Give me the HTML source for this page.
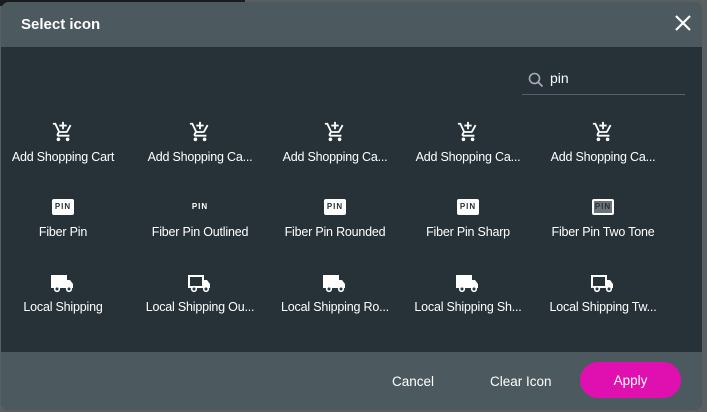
<!DOCTYPE html><html><head><style>
body{margin:0;width:707px;height:412px;background:#5a5f62;position:relative;overflow:hidden;font-family:"Liberation Sans",sans-serif;}
.tl{position:absolute;left:0;top:0;width:245px;height:6px;background:#1a1d1f}
.dlg{position:absolute;left:1px;top:2px;width:701px;height:408px;border-radius:8px;overflow:hidden;background:#263238}
.hd{position:absolute;left:0;top:0;width:100%;height:45px;background:#4c595f}
.hd .t{position:absolute;left:20px;top:14px;color:#fff;font-size:15px;font-weight:bold}
.x{position:absolute;right:10px;top:12px}
.ft{position:absolute;left:0;top:350px;width:100%;height:58px;background:#4c595f}
.btn{position:absolute;color:#fff;font-size:13.5px;top:22px}
.apply{position:absolute;left:579px;top:10px;width:101px;height:36px;border-radius:18px;background:#e010b0;color:#fff;font-size:13.5px;text-align:center;line-height:38px}
.search{position:absolute;left:521px;top:64px;width:163px;height:28px;border-bottom:1px solid #55606a}
.search span{position:absolute;left:28px;top:4px;color:#fff;font-size:14px}
.it{position:absolute;width:134px;text-align:center;color:#fff;font-size:12.5px;letter-spacing:-0.2px}
.ic{position:absolute;}
.pin{position:absolute;width:22px;height:16px;border-radius:2px;background:#fff;color:#263238;font-size:8px;font-weight:bold;text-align:center;line-height:16px;letter-spacing:1px}
</style></head><body>
<div class="tl"></div>
<div class="dlg">
<div class="hd"><div class="t">Select icon</div>
<svg class="x" width="18" height="18" viewBox="0 0 18 18"><path d="M2 2L16 16M16 2L2 16" stroke="#fff" stroke-width="2.2"/></svg></div>
<div class="search"><svg width="16" height="16" style="position:absolute;left:6px;top:6px" viewBox="0 0 16 16"><circle cx="6.5" cy="6.5" r="5" stroke="#aab" stroke-width="1.6" fill="none"/><path d="M10 10L14.5 14.5" stroke="#aab" stroke-width="1.6"/></svg><span>pin</span></div>
<div class="ft"><div class="btn" style="left:391px">Cancel</div><div class="btn" style="left:489px">Clear Icon</div><div class="apply">Apply</div></div>
</div>
<div id="g"></div>
<script>
var cx=[63,200,335,468,603];
var r1=["Add Shopping Cart","Add Shopping Ca...","Add Shopping Ca...","Add Shopping Ca...","Add Shopping Ca..."];
var r2=["Fiber Pin","Fiber Pin Outlined","Fiber Pin Rounded","Fiber Pin Sharp","Fiber Pin Two Tone"];
var r3=["Local Shipping","Local Shipping Ou...","Local Shipping Ro...","Local Shipping Sh...","Local Shipping Tw..."];
var h="";
var cart='<svg width="22" height="22" viewBox="0 0 24 24"><path d="M11 9h2V6h3V4h-3V1h-2v3H8v2h3v3zM7 18c-1.1 0-2 .9-2 2s.9 2 2 2 2-.9 2-2-.9-2-2-2zm10 0c-1.1 0-2 .9-2 2s.9 2 2 2 2-.9 2-2-.9-2-2-2zm-9.830-3.25l.03-.12.9-1.630h7.450c.75 0 1.41-.41 1.750-1.030l3.860-7.010L19.420 4h-.01l-1.100 2-2.760 5H8.530l-.13-.27L6.160 6l-.95-2-.94-2H1v2h2l3.600 7.590-1.350 2.450c-.16.28-.25.61-.25.96 0 1.100.9 2 2 2h12v-2H7.420c-.13 0-.25-.11-.25-.25z" fill="#fff"/></svg>';
function truck(o){return '<svg width="24" height="20" viewBox="0 0 24 20"><path d="M1 3h14v11H1z" fill="'+(o?'none':'#fff')+'" stroke="#fff" stroke-width="2"/><path d="M15 7h4l3 4v4h-7z" fill="#fff"/><circle cx="6" cy="16" r="2.3" fill="#263238" stroke="#fff" stroke-width="1.6"/><circle cx="18" cy="16" r="2.3" fill="#263238" stroke="#fff" stroke-width="1.6"/></svg>';}
for(var i=0;i<5;i++){
 h+='<div class="ic" style="left:'+(cx[i]-11)+'px;top:121px">'+cart+'</div>';
 h+='<div class="it" style="left:'+(cx[i]-67)+'px;top:150px">'+r1[i]+'</div>';
 var st=i==1?'background:none;color:#fff':(i==4?'background:#6b7378;color:#263238;border:2px solid #fff;width:18px;height:12px;line-height:12px':'');
 h+='<div class="pin" style="left:'+(cx[i]-11)+'px;top:199px;'+st+'">PIN</div>';
 h+='<div class="it" style="left:'+(cx[i]-67)+'px;top:225px">'+r2[i]+'</div>';
 h+='<div class="ic" style="left:'+(cx[i]-12)+'px;top:273px">'+truck(i==1||i==4)+'</div>';
 h+='<div class="it" style="left:'+(cx[i]-67)+'px;top:300px">'+r3[i]+'</div>';
}
document.getElementById('g').innerHTML=h;
</script>
</body></html>
